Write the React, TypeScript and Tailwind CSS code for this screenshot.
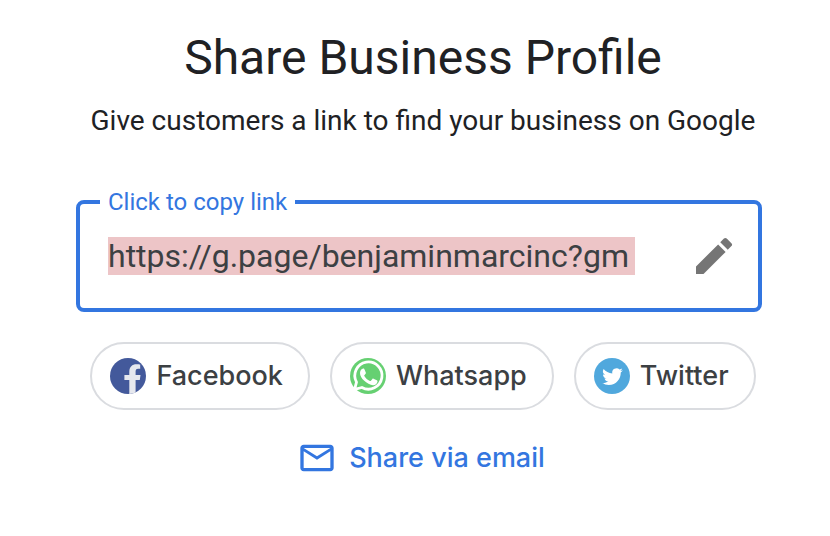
import type { ReactNode } from 'react'

interface ShareChipProps {
  label: string
  href: string
  icon: ReactNode
}

function FacebookIcon() {
  return (
    <svg viewBox="0 0 36 36" className="size-9 shrink-0" aria-hidden="true">
      <circle cx="18" cy="18" r="18" fill="#43599b" />
      <path
        d="M19.3 36V21.9h-4.9v-4.8h4.9v-3.4c0-4.9 2.9-7.5 7.2-7.5 1.8 0 3 .1 3.7.2v4.4h-2.1c-1.9 0-2.5 1.2-2.5 3v3.3h4.9l-.7 4.8h-4.2v12.5A18 18 0 0 1 19.3 36z"
        fill="#e6e8ee"
      />
    </svg>
  )
}

function WhatsappIcon() {
  return (
    <svg viewBox="0 0 36 36" className="size-9 shrink-0" aria-hidden="true">
      <circle cx="18" cy="18" r="18" fill="#66d072" />
      <path
        d="M4.6 31.4l1.9-7.3A13.6 13.6 0 1 1 11.9 29.5z"
        fill="#66d072"
        stroke="#fff"
        strokeWidth="2.8"
        strokeLinejoin="round"
      />
      <path
        d="M13.2 10.5c.5 0 .9 0 1.2.7l1.4 3.3c.2.5.1.8-.2 1.2l-1.2 1.5c-.3.3-.3.6-.1.9 1.4 2.3 3.1 3.8 5.6 4.9.4.2.7.1 1-.2l1.5-1.8c.3-.4.6-.5 1.1-.3l3.3 1.6c.6.3.8.5.7 1.2-.3 2.3-2.2 3.6-4.3 3.7-2.6.1-6.6-1.9-9.2-4.6-2.2-2.3-4.1-5.2-4-7.7.1-2.2 1.6-4.4 3.2-4.4z"
        fill="#fff"
      />
    </svg>
  )
}

function TwitterIcon() {
  return (
    <svg viewBox="0 0 36 36" className="size-9 shrink-0" aria-hidden="true">
      <circle cx="18" cy="18" r="18" fill="#50a8dd" />
      <g transform="translate(8.2 8.3) scale(.86)">
        <path
          d="M23.95 4.57a10 10 0 0 1-2.82.77 4.96 4.96 0 0 0 2.16-2.72c-.95.55-2 .95-3.13 1.18a4.92 4.92 0 0 0-8.38 4.48C7.69 8.1 4.07 6.13 1.64 3.16a4.92 4.92 0 0 0 1.52 6.57 4.9 4.9 0 0 1-2.23-.61v.06a4.92 4.92 0 0 0 3.95 4.83 5 5 0 0 1-2.21.08 4.94 4.94 0 0 0 4.6 3.42A9.87 9.87 0 0 1 0 19.54a13.99 13.99 0 0 0 7.56 2.21c9.05 0 14-7.5 14-13.98 0-.21 0-.42-.02-.63a9.94 9.94 0 0 0 2.46-2.55z"
          fill="#fff"
        />
      </g>
    </svg>
  )
}

function ShareChip({ label, href, icon }: ShareChipProps) {
  return (
    <a
      href={href}
      className="flex items-center gap-2.5 rounded-full border-2 border-[#dadce0] py-3.5 pr-[25px] pl-[18px] text-[27px] leading-9 font-medium text-[#3c4043]"
    >
      {icon}
      {label}
    </a>
  )
}

export default function App() {
  return (
    <main className="flex flex-col bg-white pt-7 pr-[68px] pl-[76px] font-['Roboto',sans-serif] text-[#202124]">
      <header className="pl-2 text-center">
        <h1 className="text-5xl leading-[60px]">Share Business Profile</h1>
        <p className="mt-[13px] text-[28px] leading-10">Give customers a link to find your business on Google</p>
      </header>

      <fieldset className="mt-[47px] flex items-center rounded-lg border-4 border-[#3376e0] pt-4 pr-5 pb-7 pl-7">
        <legend className="-ml-2 px-2 text-2xl leading-7 text-[#3376e0]">
          <label htmlFor="profile-link">Click to copy link</label>
        </legend>
        <input
          id="profile-link"
          type="text"
          readOnly
          value="https://g.page/benjaminmarcinc?gm"
          className="field-sizing-content min-w-0 bg-[#edc5c7] pr-1.5 text-[32px] leading-[38px] text-[#3c4043] outline-none"
        />
        <button type="button" aria-label="Edit link" className="ml-auto shrink-0">
          <svg viewBox="0 0 24 24" className="size-12" fill="#757575" aria-hidden="true">
            <path d="M3 17.25V21h3.75L17.81 9.94l-3.75-3.75L3 17.25zM20.71 7.04a1 1 0 0 0 0-1.41l-2.34-2.34a1 1 0 0 0-1.41 0l-1.83 1.83 3.75 3.75 1.83-1.83z" />
          </svg>
        </button>
      </fieldset>

      <nav className="mt-[30px] flex justify-center gap-5 pl-2 font-['Inter',sans-serif]">
        <ShareChip label="Facebook" href="#facebook" icon={<FacebookIcon />} />
        <ShareChip label="Whatsapp" href="#whatsapp" icon={<WhatsappIcon />} />
        <ShareChip label="Twitter" href="#twitter" icon={<TwitterIcon />} />
      </nav>

      <a
        href="#email"
        className="mt-7 ml-1 flex items-center gap-3 self-center font-['Inter',sans-serif] text-[27px] leading-10 font-medium text-[#3376e0]"
      >
        <svg viewBox="0 0 24 24" className="size-10" fill="currentColor" aria-hidden="true">
          <path d="M22 6c0-1.1-.9-2-2-2H4c-1.1 0-2 .9-2 2v12c0 1.1.9 2 2 2h16c1.1 0 2-.9 2-2V6zm-2 0l-8 5-8-5h16zm0 12H4V8l8 5 8-5v10z" />
        </svg>
        Share via email
      </a>
    </main>
  )
}
